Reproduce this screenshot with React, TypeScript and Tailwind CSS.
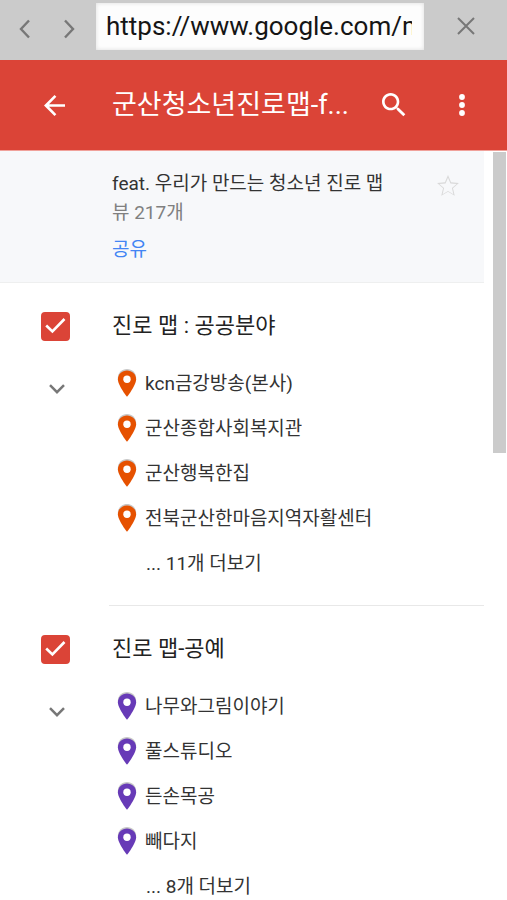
import React, { useState } from 'react';

interface Layer {
  id: string;
  title: string;
  pinColor: string;
  places: string[];
  more: string;
}

const LAYERS: Layer[] = [
  {
    id: 'public',
    title: '진로 맵 : 공공분야',
    pinColor: 'text-[#e65100]',
    places: ['kcn금강방송(본사)', '군산종합사회복지관', '군산행복한집', '전북군산한마음지역자활센터'],
    more: '... 11개 더보기',
  },
  {
    id: 'craft',
    title: '진로 맵-공예',
    pinColor: 'text-[#673ab7]',
    places: ['나무와그림이야기', '풀스튜디오', '든손목공', '빼다지'],
    more: '... 8개 더보기',
  },
];

const Pin: React.FC<{ className: string }> = ({ className }) => (
  <svg viewBox="0 0 20 30" className={`h-[30px] w-5 shrink-0 ${className}`} aria-hidden="true">
    <path
      d="M10 0C4.8 0 0.8 3.9 0.8 9C0.8 15 10 27 10 27S19.2 15 19.2 9C19.2 3.9 15.2 0 10 0Z"
      fill="#000000"
      opacity="0.22"
    />
    <path
      fill="currentColor"
      d="M10 1.4C5 1.4 0.9 5.3 0.9 10.2C0.9 16.4 10 27.8 10 27.8S19.1 16.4 19.1 10.2C19.1 5.3 15 1.4 10 1.4Z"
    />
    <circle cx="10" cy="10.2" r="3.7" fill="#ffffff" />
  </svg>
);

const BrowserBar: React.FC = () => {
  const [url, setUrl] = useState('https://www.google.com/maps');

  return (
    <div className="flex h-[60px] shrink-0 items-start bg-[#cbcbcb] pt-[3px] text-[#777777]">
      <div className="flex w-24 shrink-0 pl-[3px]">
        <button aria-label="이전" className="flex h-[52px] w-11 items-center justify-center">
          <svg viewBox="0 0 12 20" className="h-5 w-3" fill="none" stroke="currentColor" strokeWidth="2.4">
            <path d="M10 1.5L2 10L10 18.5" />
          </svg>
        </button>
        <button aria-label="다음" className="flex h-[52px] w-11 items-center justify-center">
          <svg viewBox="0 0 12 20" className="h-5 w-3" fill="none" stroke="currentColor" strokeWidth="2.4">
            <path d="M2 1.5L10 10L2 18.5" />
          </svg>
        </button>
      </div>
      <input
        type="text"
        aria-label="주소"
        value={url}
        onChange={(e) => setUrl(e.target.value)}
        className="h-[47px] min-w-0 flex-1 bg-[#fdfdfd] pr-3 pb-0.5 pl-2.5 text-[26px] text-[#151515] shadow-[inset_0_0_4px_#dddddd] outline-none"
      />
      <button aria-label="닫기" className="flex h-[46px] w-[83px] shrink-0 items-center justify-center">
        <svg viewBox="0 0 18 18" className="h-[18px] w-[18px]" fill="none" stroke="currentColor" strokeWidth="2">
          <path d="M1 1L17 17M17 1L1 17" />
        </svg>
      </button>
    </div>
  );
};

const AppBar: React.FC = () => (
  <header className="flex h-[91px] shrink-0 items-center border-b border-[#f0a19a] bg-[#db4437] text-white">
    <button aria-label="뒤로" className="flex h-12 w-28 shrink-0 items-center justify-center">
      <svg viewBox="4 4 16 16" className="mr-1 h-[21px] w-[21px]" fill="currentColor">
        <path d="M20 11H7.83l5.59-5.59L12 4l-8 8 8 8 1.41-1.41L7.83 13H20v-2z" />
      </svg>
    </button>
    <h1 className="min-w-0 flex-1 truncate text-[27px] leading-10">군산청소년진로맵-f...</h1>
    <button aria-label="검색" className="flex h-12 w-16 shrink-0 items-center justify-center">
      <svg viewBox="3 3 18 18" className="h-6 w-6" fill="currentColor">
        <path d="M15.5 14h-.79l-.28-.27C15.41 12.59 16 11.11 16 9.5 16 5.91 13.09 3 9.5 3S3 5.91 3 9.5 5.91 16 9.5 16c1.61 0 3.09-.59 4.23-1.57l.27.28v.79l5 4.99L20.49 19l-4.99-5zm-6 0C7.01 14 5 11.99 5 9.5S7.01 5 9.5 5 14 7.01 14 9.5 11.99 14 9.5 14z" />
      </svg>
    </button>
    <button aria-label="더보기" className="mr-2.5 flex h-12 w-[71px] shrink-0 items-center justify-center">
      <svg viewBox="0 0 6 22" className="h-[22px] w-1.5" fill="currentColor">
        <circle cx="3" cy="3" r="2.9" />
        <circle cx="3" cy="11" r="2.9" />
        <circle cx="3" cy="19" r="2.9" />
      </svg>
    </button>
  </header>
);

const MapSummary: React.FC = () => (
  <div className="flex items-start border-b border-[#eeefef] bg-[#f7f8fa] pt-[18px] pb-[18px] pl-28 text-[19px]">
    <div className="min-w-0 flex-1">
      <p className="leading-[29px] text-[#333333]">feat. 우리가 만드는 청소년 진로 맵</p>
      <p className="leading-[29px] text-[#808080]">뷰 217개</p>
      <a href="#share" className="mt-2 block leading-[29px] text-[#4285f4]">
        공유
      </a>
    </div>
    <button aria-label="즐겨찾기" className="mt-[5px] mr-6 h-6 w-6 shrink-0 text-[#d9d9d9]">
      <svg viewBox="1 1 22 22" className="h-6 w-6" fill="currentColor">
        <path d="M22 9.24l-7.19-.62L12 2 9.19 8.63 2 9.24l5.46 4.73L5.82 21 12 17.27 18.18 21l-1.63-7.03L22 9.24zM12 16.5l-4.9 2.96 1.3-5.57-4.33-3.75 5.7-.49L12 4.4l2.23 5.25 5.7.49-4.33 3.75 1.3 5.57L12 16.5z" />
      </svg>
    </button>
  </div>
);

const LayerSection: React.FC<{ layer: Layer }> = ({ layer }) => {
  const [visible, setVisible] = useState(true);

  return (
    <section>
      <div className="flex items-center pt-[21px] pb-[13px]">
        <div className="relative ml-[41px] h-[29px] w-[71px] shrink-0">
          <input
            id={layer.id}
            type="checkbox"
            checked={visible}
            onChange={(e) => setVisible(e.target.checked)}
            className="peer block h-[29px] w-[29px] appearance-none rounded-[4px] border-2 border-[#db4437] checked:bg-[#db4437]"
          />
          <svg
            viewBox="0 0 29 29"
            className="pointer-events-none absolute top-0 left-0 hidden h-[29px] w-[29px] peer-checked:block"
            fill="none"
            stroke="#ffffff"
            strokeWidth="2.6"
          >
            <path d="M5.2 13.5L11.4 19.5L23.5 7" />
          </svg>
        </div>
        <label htmlFor={layer.id} className="text-[22px] leading-[44px] text-[#222222]">
          {layer.title}
        </label>
      </div>

      <div className="flex">
        <div className="flex w-[113px] shrink-0 justify-center">
          <button aria-label="접기" className="flex h-[55px] w-11 items-center justify-center text-[#777777]">
            <svg viewBox="0 0 16 10" className="h-2.5 w-4" fill="none" stroke="currentColor" strokeWidth="2.5">
              <path d="M1 1.2L8 8.2L15 1.2" />
            </svg>
          </button>
        </div>
        <ul className="min-w-0 flex-1 pl-1 text-[19px] leading-[45px] text-[#333333]">
          {layer.places.map((place) => (
            <li key={place} className="flex items-center gap-2">
              <Pin className={layer.pinColor} />
              <span className="truncate">{place}</span>
            </li>
          ))}
          <li className="pl-[29px]">
            <button className="block">{layer.more}</button>
          </li>
        </ul>
      </div>

      <div className="mt-[19px] ml-[109px] border-b border-[#e8e8e8]" />
    </section>
  );
};

export default function App() {
  return (
    <div className="flex h-screen flex-col overflow-hidden bg-white font-['Roboto','Noto_Sans_CJK_KR',sans-serif]">
      <BrowserBar />
      <AppBar />
      <div className="flex min-h-0 flex-1 overflow-hidden">
        <main className="min-w-0 flex-1">
          <MapSummary />
          {LAYERS.map((layer) => (
            <LayerSection key={layer.id} layer={layer} />
          ))}
        </main>
        {/* scroll track */}
        <div className="w-[23px] shrink-0 pt-px pl-[9px]">
          <div className="h-[301px] w-[13px] bg-[#cbcbcb]" />
        </div>
      </div>
    </div>
  );
}
